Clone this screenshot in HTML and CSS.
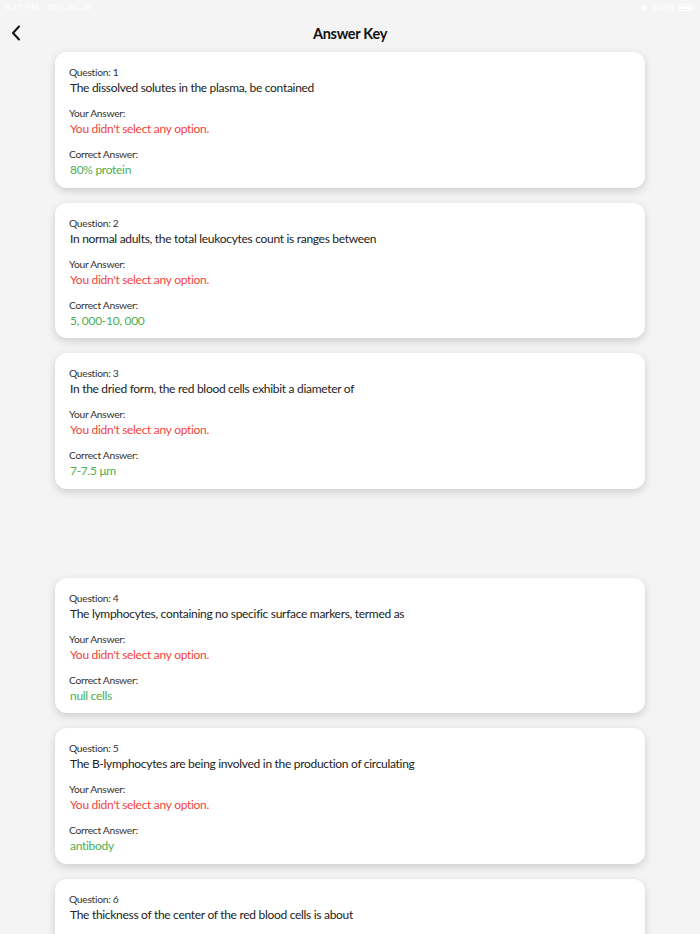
FILE: index.html
```html
<!DOCTYPE html>
<html>
<head>
<meta charset="utf-8">
<link rel="stylesheet" href="styles.css">
</head>
<body>
<div class="status">
  <span class="status-left">8:27 PM&nbsp;&nbsp;&nbsp;Thu Jan 28</span>
  <span class="status-right">
    <svg class="wifi" width="11" height="9" viewBox="0 0 11 9"><path d="M5.5 8.5 L3.6 6.4 A2.8 2.8 0 0 1 7.4 6.4 Z M2.4 5.2 A4.6 4.6 0 0 1 8.6 5.2 L7.9 6 A3.6 3.6 0 0 0 3.1 6 Z M1.1 3.8 A6.5 6.5 0 0 1 9.9 3.8 L9.2 4.6 A5.5 5.5 0 0 0 1.8 4.6 Z" fill="#fff"/></svg>
    <span>100%</span>
    <span class="battery"><span class="battery-fill"></span></span>
  </span>
</div>
<header class="topbar">
  <svg class="back" width="20" height="20" viewBox="0 0 20 20"><path d="M13 3.5 L7 10 L13 16.5" fill="none" stroke="#111" stroke-width="2" stroke-linecap="round" stroke-linejoin="round"/></svg>
  <h1 class="title">Answer Key</h1>
</header>
<main class="list">
  <section class="card">
    <div class="label">Question: 1</div>
    <div class="question">The dissolved solutes in the plasma, be contained</div>
    <div class="label gap">Your Answer:</div>
    <div class="wrong">You didn't select any option.</div>
    <div class="label gap">Correct Answer:</div>
    <div class="right">80% protein</div>
  </section>
  <section class="card">
    <div class="label">Question: 2</div>
    <div class="question">In normal adults, the total leukocytes count is ranges between</div>
    <div class="label gap">Your Answer:</div>
    <div class="wrong">You didn't select any option.</div>
    <div class="label gap">Correct Answer:</div>
    <div class="right">5, 000-10, 000</div>
  </section>
  <section class="card">
    <div class="label">Question: 3</div>
    <div class="question">In the dried form, the red blood cells exhibit a diameter of</div>
    <div class="label gap">Your Answer:</div>
    <div class="wrong">You didn't select any option.</div>
    <div class="label gap">Correct Answer:</div>
    <div class="right">7-7.5 μm</div>
  </section>
  <div class="spacer"></div>
  <section class="card">
    <div class="label">Question: 4</div>
    <div class="question">The lymphocytes, containing no specific surface markers, termed as</div>
    <div class="label gap">Your Answer:</div>
    <div class="wrong">You didn't select any option.</div>
    <div class="label gap">Correct Answer:</div>
    <div class="right">null cells</div>
  </section>
  <section class="card">
    <div class="label">Question: 5</div>
    <div class="question">The B-lymphocytes are being involved in the production of circulating</div>
    <div class="label gap">Your Answer:</div>
    <div class="wrong">You didn't select any option.</div>
    <div class="label gap">Correct Answer:</div>
    <div class="right">antibody</div>
  </section>
  <section class="card">
    <div class="label">Question: 6</div>
    <div class="question">The thickness of the center of the red blood cells is about</div>
    <div class="label gap">Your Answer:</div>
    <div class="wrong">You didn't select any option.</div>
    <div class="label gap">Correct Answer:</div>
    <div class="right">1 μm</div>
  </section>
</main>
</body>
</html>
```

FILE: styles.css
```css
html, body {
  margin: 0;
  padding: 0;
  background: #f4f4f4;
  font-family: Lato, "Noto Sans", sans-serif;
  height: 934px;
  overflow: hidden;
}

.status {
  height: 14px;
  display: flex;
  justify-content: space-between;
  align-items: center;
  padding: 0 6px 0 5px;
  color: #ffffff;
  font-size: 9px;
  font-family: "Liberation Sans", sans-serif;
}

.status-right {
  display: flex;
  align-items: center;
  gap: 3px;
}

.battery {
  width: 16px;
  height: 7px;
  border: 1px solid #fff;
  border-radius: 2px;
  box-sizing: border-box;
  display: flex;
  padding: 1px;
}

.battery-fill {
  flex: 1;
  background: #fff;
}

.topbar {
  height: 38px;
  display: flex;
  align-items: center;
  justify-content: center;
  position: relative;
}

.back {
  position: absolute;
  left: 6px;
  top: 9px;
}

.title {
  margin: 0;
  font-size: 14.5px;
  font-weight: 700;
  letter-spacing: -0.3px;
  color: #111;
}

.list {
  display: flex;
  flex-direction: column;
  gap: 15px;
  width: 590px;
  margin-left: 55px;
}

.spacer {
  height: 59px;
}

.card {
  background: #fff;
  border-radius: 12px;
  box-shadow: 0 3px 8px rgba(0, 0, 0, 0.16);
  padding: 13px 14px 10.5px 14px;
  display: flex;
  flex-direction: column;
}

.label {
  font-size: 10.3px;
  line-height: 15px;
  letter-spacing: -0.3px;
  color: #333;
}

.label.gap {
  margin-top: 11px;
}

.question,
.wrong,
.right {
  font-size: 12px;
  line-height: 15px;
  letter-spacing: -0.3px;
  padding-left: 1px;
}

.question {
  color: #222;
}

.wrong {
  color: #f4433c;
}

.right {
  color: #4caf50;
}
```
